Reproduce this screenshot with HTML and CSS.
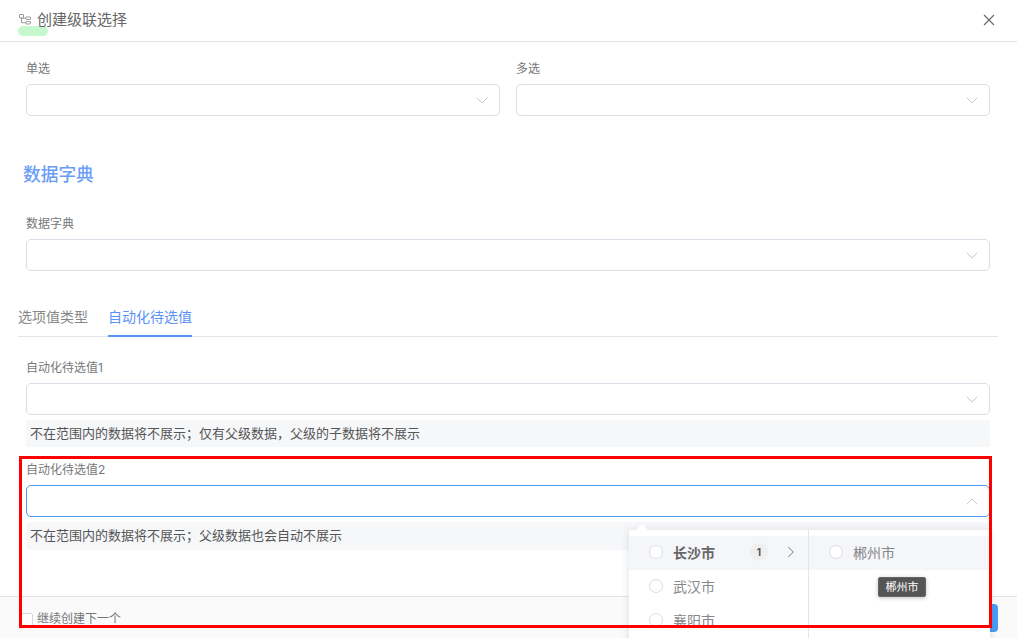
FILE: index.html
```html
<!DOCTYPE html>
<html lang="zh">
<head>
<meta charset="utf-8">
<title>创建级联选择</title>
<link rel="stylesheet" href="styles.css">
</head>
<body>
<div class="modal">
  <header class="head">
    <div class="title-wrap">
      <svg class="flow-icon" width="14" height="14" viewBox="0 0 14 14" fill="none" stroke="#999"><rect x="1.5" y="1.5" width="4" height="3.5" rx=".5"/><rect x="8" y="4" width="4.5" height="2.5" rx=".5"/><rect x="8" y="8.5" width="4.5" height="2.5" rx=".5"/><path d="M3.5 5v4.7H8M3.5 5.2H8"/></svg>
      <span class="green-mark"></span>
      <h1 class="title">创建级联选择</h1>
    </div>
    <svg class="close" width="14" height="14" viewBox="0 0 14 14" fill="none" stroke="#666" stroke-width="1.1"><path d="M2 2l10 10M12 2L2 12"/></svg>
  </header>
  <main class="body">
    <div class="two-col">
      <div class="field">
        <label class="label">单选</label>
        <div class="select"><svg class="chev" width="12" height="7" viewBox="0 0 12 7" fill="none" stroke="#c6c9d2"><path d="M.8.8 6 6 11.2.8"/></svg></div>
      </div>
      <div class="field">
        <label class="label">多选</label>
        <div class="select"><svg class="chev" width="12" height="7" viewBox="0 0 12 7" fill="none" stroke="#c6c9d2"><path d="M.8.8 6 6 11.2.8"/></svg></div>
      </div>
    </div>
    <h2 class="section">数据字典</h2>
    <div class="field dict">
      <label class="label">数据字典</label>
      <div class="select"><svg class="chev" width="12" height="7" viewBox="0 0 12 7" fill="none" stroke="#c6c9d2"><path d="M.8.8 6 6 11.2.8"/></svg></div>
    </div>
    <nav class="tabs">
      <span class="tab">选项值类型</span>
      <span class="tab active">自动化待选值</span>
    </nav>
    <div class="field auto1">
      <label class="label">自动化待选值1</label>
      <div class="select"><svg class="chev" width="12" height="7" viewBox="0 0 12 7" fill="none" stroke="#c6c9d2"><path d="M.8.8 6 6 11.2.8"/></svg></div>
      <p class="tip tip1">不在范围内的数据将不展示；仅有父级数据，父级的子数据将不展示</p>
    </div>
    <div class="field auto2">
      <label class="label">自动化待选值2</label>
      <div class="select focus"><svg class="chev" width="12" height="7" viewBox="0 0 12 7" fill="none" stroke="#c6c9d2"><path d="M.8 6.2 6 1l5.2 5.2"/></svg></div>
      <p class="tip tip2">不在范围内的数据将不展示；父级数据也会自动不展示</p>
    </div>
  </main>
  <footer class="foot">
    <label class="check"><span class="box"></span><span>继续创建下一个</span></label>
    <span class="btn"></span>
  </footer>
</div>

<div class="dropdown">
  <span class="arrow"></span>
  <div class="col col-left">
    <div class="opt hover"><span class="radio"></span><span class="name strong">长沙市</span><span class="count">1</span><svg class="next" width="8" height="12" viewBox="0 0 8 12" fill="none" stroke="#777"><path d="M1.2 1 6.4 6l-5.2 5"/></svg></div>
    <div class="opt"><span class="radio"></span><span class="name">武汉市</span></div>
    <div class="opt"><span class="radio"></span><span class="name">襄阳市</span></div>
  </div>
  <div class="col col-right">
    <div class="opt hover"><span class="radio"></span><span class="name">郴州市</span></div>
  </div>
</div>
<div class="tooltip">郴州市</div>
<div class="redbox"></div>
</body>
</html>
```
FILE: styles.css
```css
* { box-sizing: border-box; }
html, body { margin: 0; height: 100%; overflow: hidden; background: #fff; }
body { font-family: Inter, "Liberation Sans", "Noto Sans CJK SC", sans-serif; color: #555; position: relative; }
.modal { height: 638px; display: flex; flex-direction: column; }
.head { height: 42px; flex: none; border-bottom: 1px solid #e3e4e8; display: flex; align-items: center; justify-content: space-between; padding: 0 21px 2px 18px; }
.title-wrap { display: flex; align-items: center; gap: 5px; position: relative; }
.flow-icon { flex: none; }
.green-mark { position: absolute; left: 0; top: 16px; width: 30px; height: 10px; border-radius: 5px; background: #c5f8cc; }
.title { margin: 0; font-size: 15px; line-height: 20px; font-weight: 400; color: #666; position: relative; }
.close { flex: none; }
.body { flex: 1; padding: 19px 19px 0 18px; min-height: 0; }
.two-col { display: grid; grid-template-columns: 474px 474px; gap: 16px; padding-left: 8px; }
.label { display: block; font-size: 12px; line-height: 16px; color: #777; margin-bottom: 7px; }
.select { height: 32px; border: 1px solid #dcdde6; border-radius: 5px; background: #fff; display: flex; align-items: center; justify-content: flex-end; padding-right: 11px; }
.select.focus { border-color: #4a9cf5; }
.field { min-width: 0; }
.section { margin: 46px 0 0 5px; font-size: 17.7px; line-height: 26px; font-weight: 500; color: #6a9df7; }
.dict { margin: 28px 8px 0 8px; width: 964px; }
.tabs { margin-top: 36px; height: 30px; width: 980px; border-bottom: 1px solid #e3e4ec; display: flex; gap: 20px; }
.tab { font-size: 14px; line-height: 20px; height: 30px; color: #888; }
.tab.active { color: #5a92f6; border-bottom: 2px solid #5a92f6; }
.auto1 { margin: 23px 0 0 8px; width: 964px; }
.tip { margin: 5px 0 0; border-radius: 3px; background: #f6f7f9; font-size: 13px; color: #555; padding: 0 4px; }
.tip1 { height: 27px; line-height: 27px; }
.tip2 { height: 28px; line-height: 27px; }
.auto2 { margin: 15px 0 0 8px; width: 964px; }
.foot { height: 42px; flex: none; border-top: 1px solid #e3e4e8; background: #fafafb; display: flex; align-items: flex-start; justify-content: space-between; padding: 7px 19px 0 20px; }
.check { display: flex; align-items: center; gap: 4px; font-size: 12px; line-height: 16px; color: #777; margin-top: 7px; }
.box { width: 13px; height: 13px; background: #fff; border: 1px solid #d5d6dc; border-radius: 2px; }
.btn { width: 40px; height: 28px; background: #4a9cf5; border-radius: 4px; }
.dropdown { position: absolute; left: 629px; top: 530px; width: 361px; height: 120px; background: #fff; border-radius: 3px; box-shadow: 0 1px 8px rgba(40, 50, 80, .14); display: flex; padding-top: 6px; }
.arrow { position: absolute; left: 7px; top: -6px; width: 0; height: 0; border: 6px solid transparent; border-top: 0; border-bottom-color: #fff; }
.col-left { width: 180px; border-right: 1px solid #e3e4ec; margin-top: -6px; padding-top: 6px; }
.col-right { flex: 1; margin-top: 0; }
.opt { height: 34px; display: flex; align-items: center; padding: 0 0 3px 20px; font-size: 14px; color: #888; }
.opt.hover { background: #f5f6fa; }
.radio { width: 14px; height: 14px; border-radius: 50%; border: 1px solid #dcdde6; background: #fff; margin-right: 10px; flex: none; }
.name.strong { font-weight: 700; color: #666; }
.count { margin-left: 35px; width: 18px; height: 18px; border-radius: 50%; background: #efefef; font-size: 10px; font-weight: 700; line-height: 18px; text-align: center; color: #555; }
.next { margin-left: 19px; }
.tooltip { position: absolute; left: 878px; top: 577px; width: 48px; height: 20px; background: #555; border: 1px solid #666; border-radius: 2px; box-shadow: 0 1px 4px rgba(0,0,0,.25); color: #fff; font-size: 11px; line-height: 18px; text-align: center; }
.redbox { position: absolute; left: 19px; top: 456px; width: 973px; height: 172px; border: 3px solid #f00; pointer-events: none; }
```
